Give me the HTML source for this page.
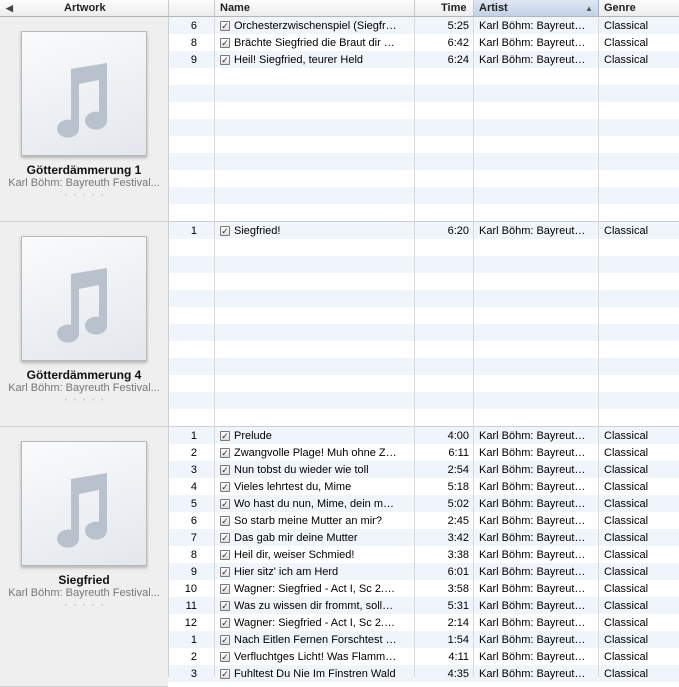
<!DOCTYPE html>
<html><head><meta charset="utf-8"><style>
*{margin:0;padding:0;box-sizing:border-box}
body{width:679px;height:677px;overflow:hidden;background:#fff;font-family:"Liberation Sans",sans-serif;font-size:11px;color:#000;position:relative}
.hdr{position:absolute;left:0;top:0;width:679px;height:17px;background:linear-gradient(#fdfdfd,#ececec);border-bottom:1px solid #b5b5b5}
.hdr span{position:absolute;top:2px;font-weight:bold;font-size:11px;color:#222}
.hsep{position:absolute;top:0;width:1px;height:16px;background:#c8c8c8}
.art{position:absolute;left:0;width:168px;background:#efefef;border-bottom:1px solid #d0d0d0}
.box{position:absolute;left:21px;top:14px;width:126px;height:125px;border:1px solid #b8b8b8;background:linear-gradient(160deg,#fafbfc,#e3e7ed);box-shadow:0 2px 3px rgba(0,0,0,.25)}
.ttl{position:absolute;left:0;width:168px;text-align:center;font-weight:bold;font-size:12px;color:#111}
.sub{position:absolute;left:0;width:168px;text-align:center;font-size:11px;color:#777}
.dots{position:absolute;left:0;width:168px;text-align:center;font-size:6px;color:#c4c4c4;letter-spacing:7px;padding-left:7px}
.grp{position:absolute;left:168px;width:511px;border-bottom:1px solid #d0d0d0}
.r{position:relative;height:17px;width:511px}
.r:nth-child(odd){background:#f0f4fb}
.r span{position:absolute;top:3px;white-space:nowrap}
.n{right:482px;text-align:right}
.cb{left:52px;top:4px!important;width:10px;height:10px;border:1px solid #7a7a7a;background:linear-gradient(#fff,#ddd);border-radius:1px;font-size:9px;line-height:8px;text-align:center;color:#333}
.t{left:66px}
.tm{right:210px}
.a{left:311px}
.g{left:436px}
.vl{position:absolute;top:17px;width:1px;height:660px;background:#d9d9d9}
</style></head><body>
<div class="hdr">
<span style="left:6px;top:3px;font-size:9px;color:#444">&#9664;</span>
<span style="left:64px">Artwork</span>
<div class="hsep" style="left:168px"></div>
<span style="left:220px">Name</span>
<div class="hsep" style="left:214px"></div>
<div class="hsep" style="left:414px"></div>
<span style="left:441px">Time</span>
<div style="position:absolute;left:474px;top:0;width:124px;height:16px;background:linear-gradient(#dfe7f3,#c3d1e6)"></div>
<span style="left:479px">Artist</span>
<span style="left:585px;top:4px;font-size:8px;color:#555">&#9650;</span>
<div class="hsep" style="left:473px"></div>
<div class="hsep" style="left:598px;background:#9fb3d3"></div>
<span style="left:604px">Genre</span>
</div>

<div class="art" style="top:17px;height:205px">
<div class="box"><svg width="124" height="123" viewBox="0 0 124 123"><path d="M49 37 L85 31 L85 88 A11 9 0 1 1 77 80 L77 48 L57 52 L57 96 A11 9 0 1 1 49 88 Z" fill="#b9c1cd"/></svg></div>
<div class="ttl" style="top:146px">Götterdämmerung 1</div>
<div class="sub" style="top:160px">Karl Böhm: Bayreuth Festival...</div>
<div class="dots" style="top:176px">•••••</div>
</div>
<div class="art" style="top:222px;height:205px">
<div class="box"><svg width="124" height="123" viewBox="0 0 124 123"><path d="M49 37 L85 31 L85 88 A11 9 0 1 1 77 80 L77 48 L57 52 L57 96 A11 9 0 1 1 49 88 Z" fill="#b9c1cd"/></svg></div>
<div class="ttl" style="top:146px">Götterdämmerung 4</div>
<div class="sub" style="top:160px">Karl Böhm: Bayreuth Festival...</div>
<div class="dots" style="top:176px">•••••</div>
</div>
<div class="art" style="top:427px;height:260px">
<div class="box"><svg width="124" height="123" viewBox="0 0 124 123"><path d="M49 37 L85 31 L85 88 A11 9 0 1 1 77 80 L77 48 L57 52 L57 96 A11 9 0 1 1 49 88 Z" fill="#b9c1cd"/></svg></div>
<div class="ttl" style="top:146px">Siegfried</div>
<div class="sub" style="top:160px">Karl Böhm: Bayreuth Festival...</div>
<div class="dots" style="top:176px">•••••</div>
</div>

<div class="grp" style="top:17px;height:205px">
<div class="r"><span class="n">6</span><span class="cb">✓</span><span class="t">Orchesterzwischenspiel (Siegfr…</span><span class="tm">5:25</span><span class="a">Karl Böhm: Bayreut…</span><span class="g">Classical</span></div>
<div class="r"><span class="n">8</span><span class="cb">✓</span><span class="t">Brächte Siegfried die Braut dir …</span><span class="tm">6:42</span><span class="a">Karl Böhm: Bayreut…</span><span class="g">Classical</span></div>
<div class="r"><span class="n">9</span><span class="cb">✓</span><span class="t">Heil! Siegfried, teurer Held</span><span class="tm">6:24</span><span class="a">Karl Böhm: Bayreut…</span><span class="g">Classical</span></div>
<div class="r"></div><div class="r"></div><div class="r"></div><div class="r"></div><div class="r"></div><div class="r"></div><div class="r"></div><div class="r"></div><div class="r"></div>
</div>
<div class="grp" style="top:222px;height:205px">
<div class="r"><span class="n">1</span><span class="cb">✓</span><span class="t">Siegfried!</span><span class="tm">6:20</span><span class="a">Karl Böhm: Bayreut…</span><span class="g">Classical</span></div>
<div class="r"></div><div class="r"></div><div class="r"></div><div class="r"></div><div class="r"></div><div class="r"></div><div class="r"></div><div class="r"></div><div class="r"></div><div class="r"></div><div class="r"></div>
</div>
<div class="grp" style="top:427px;height:260px;border:0">
<div class="r"><span class="n">1</span><span class="cb">✓</span><span class="t">Prelude</span><span class="tm">4:00</span><span class="a">Karl Böhm: Bayreut…</span><span class="g">Classical</span></div>
<div class="r"><span class="n">2</span><span class="cb">✓</span><span class="t">Zwangvolle Plage! Muh ohne Z…</span><span class="tm">6:11</span><span class="a">Karl Böhm: Bayreut…</span><span class="g">Classical</span></div>
<div class="r"><span class="n">3</span><span class="cb">✓</span><span class="t">Nun tobst du wieder wie toll</span><span class="tm">2:54</span><span class="a">Karl Böhm: Bayreut…</span><span class="g">Classical</span></div>
<div class="r"><span class="n">4</span><span class="cb">✓</span><span class="t">Vieles lehrtest du, Mime</span><span class="tm">5:18</span><span class="a">Karl Böhm: Bayreut…</span><span class="g">Classical</span></div>
<div class="r"><span class="n">5</span><span class="cb">✓</span><span class="t">Wo hast du nun, Mime, dein m…</span><span class="tm">5:02</span><span class="a">Karl Böhm: Bayreut…</span><span class="g">Classical</span></div>
<div class="r"><span class="n">6</span><span class="cb">✓</span><span class="t">So starb meine Mutter an mir?</span><span class="tm">2:45</span><span class="a">Karl Böhm: Bayreut…</span><span class="g">Classical</span></div>
<div class="r"><span class="n">7</span><span class="cb">✓</span><span class="t">Das gab mir deine Mutter</span><span class="tm">3:42</span><span class="a">Karl Böhm: Bayreut…</span><span class="g">Classical</span></div>
<div class="r"><span class="n">8</span><span class="cb">✓</span><span class="t">Heil dir, weiser Schmied!</span><span class="tm">3:38</span><span class="a">Karl Böhm: Bayreut…</span><span class="g">Classical</span></div>
<div class="r"><span class="n">9</span><span class="cb">✓</span><span class="t">Hier sitz' ich am Herd</span><span class="tm">6:01</span><span class="a">Karl Böhm: Bayreut…</span><span class="g">Classical</span></div>
<div class="r"><span class="n">10</span><span class="cb">✓</span><span class="t">Wagner: Siegfried - Act I, Sc 2.…</span><span class="tm">3:58</span><span class="a">Karl Böhm: Bayreut…</span><span class="g">Classical</span></div>
<div class="r"><span class="n">11</span><span class="cb">✓</span><span class="t">Was zu wissen dir frommt, soll…</span><span class="tm">5:31</span><span class="a">Karl Böhm: Bayreut…</span><span class="g">Classical</span></div>
<div class="r"><span class="n">12</span><span class="cb">✓</span><span class="t">Wagner: Siegfried - Act I, Sc 2.…</span><span class="tm">2:14</span><span class="a">Karl Böhm: Bayreut…</span><span class="g">Classical</span></div>
<div class="r"><span class="n">1</span><span class="cb">✓</span><span class="t">Nach Eitlen Fernen Forschtest …</span><span class="tm">1:54</span><span class="a">Karl Böhm: Bayreut…</span><span class="g">Classical</span></div>
<div class="r"><span class="n">2</span><span class="cb">✓</span><span class="t">Verfluchtges Licht! Was Flamm…</span><span class="tm">4:11</span><span class="a">Karl Böhm: Bayreut…</span><span class="g">Classical</span></div>
<div class="r"><span class="n">3</span><span class="cb">✓</span><span class="t">Fuhltest Du Nie Im Finstren Wald</span><span class="tm">4:35</span><span class="a">Karl Böhm: Bayreut…</span><span class="g">Classical</span></div>
</div>

<div class="vl" style="left:168px;background:#cfcfcf"></div>
<div class="vl" style="left:214px"></div>
<div class="vl" style="left:414px"></div>
<div class="vl" style="left:473px"></div>
<div class="vl" style="left:598px"></div>
</body></html>
